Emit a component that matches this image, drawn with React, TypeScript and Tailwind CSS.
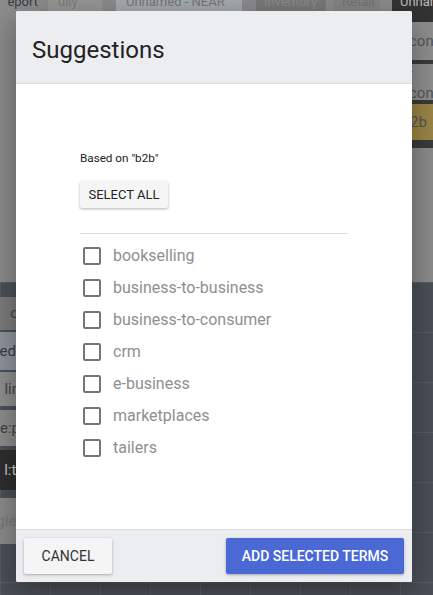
import React from 'react';

const terms = [
  'bookselling',
  'business-to-business',
  'business-to-consumer',
  'crm',
  'e-business',
  'marketplaces',
  'tailers',
];

function Backdrop() {
  return (
    <div className="flex h-full w-full flex-col">
      {/* top strip of tabs, dimmed */}
      <div className="flex h-[282px] flex-col bg-[#8a8a8a]">
        <div className="flex h-[22px] text-[13px] leading-none">
          <div className="flex w-[42px] items-start justify-end overflow-hidden bg-[#8c8c8c] pr-1 text-[#3c3c3c]">
            <span className="-mt-[5px]">eport</span>
          </div>
          <div className="ml-[6px] w-[54px] overflow-hidden bg-[#959595] pl-[10px] text-[#7a7a7a]">
            <span className="-mt-[5px] block">ully</span>
          </div>
          <div className="ml-[14px] w-[126px] overflow-hidden bg-[#a3a8ad] pl-[10px] text-[#727578]">
            <span className="-mt-[5px] block">Unnamed - NEAR</span>
          </div>
          <div className="ml-[14px] w-[70px] overflow-hidden bg-[#787878] pl-[8px] text-[#8a8a8a]">
            <span className="-mt-[5px] block">Inventory</span>
          </div>
          <div className="ml-[8px] w-[46px] overflow-hidden bg-[#848484] pl-[8px] text-[#727272]">
            <span className="-mt-[5px] block">Retail</span>
          </div>
          <div className="ml-[12px] flex-1 overflow-hidden bg-[#333333] pl-[8px] text-[#bdbdbd]">
            <span className="-mt-[5px] block">Unnamed</span>
          </div>
        </div>
        <div className="flex flex-1 justify-end">
          <div className="flex w-[24px] flex-col bg-[#3a3a3a] text-[15px] text-[#555]">
            <div className="flex h-[38px] items-center overflow-hidden bg-[#8d8d8d]">con</div>
            <div className="mt-[4px] flex h-[36px] items-center overflow-hidden bg-[#8d8d8d]">-con</div>
            <div className="mt-[4px] flex h-[36px] items-center overflow-hidden bg-[#9a8545] pl-[1px]">2b</div>
            <div className="mt-[8px] flex-1 bg-[#8a8a8a]" />
          </div>
        </div>
      </div>
      {/* lower grid area */}
      <div className="flex flex-1 bg-[#4a4f57] bg-[linear-gradient(to_right,rgba(255,255,255,0.07)_1px,transparent_1px),linear-gradient(to_bottom,rgba(255,255,255,0.07)_1px,transparent_1px)] bg-[size:50px_50px]">
        <div className="flex w-[20px] flex-col pt-[15px] text-[15px] text-[#444]">
          <div className="flex h-[33px] items-center justify-end overflow-hidden bg-[#7b7b7b] pr-[2px]">c</div>
          <div className="mt-[2px] flex h-[38px] items-center justify-end overflow-hidden bg-[#8c949c] text-[#3d3d3d]">edI</div>
          <div className="mt-[2px] flex h-[34px] items-center justify-end overflow-hidden bg-[#8e8e8e]">lin</div>
          <div className="mt-[4px] flex h-[36px] items-center justify-end overflow-hidden bg-[#8c8c8c]">le:p</div>
          <div className="mt-[4px] flex h-[40px] items-center justify-end overflow-hidden bg-[#2e2e2e] text-[#c8c8c8]">l:ti</div>
          <div className="mt-[8px] flex h-[46px] items-center justify-end overflow-hidden bg-[#8a8a8a] text-[#777]">glel</div>
        </div>
      </div>
    </div>
  );
}

function Checkbox() {
  return <span className="inline-block h-[18px] w-[18px] shrink-0 rounded-[2px] border-2 border-[#757575]" />;
}

export default function App() {
  return (
    <div className="relative h-[595px] w-[433px] overflow-hidden font-['Roboto',sans-serif]">
      <Backdrop />
      <div className="absolute left-[16px] top-[11px] flex h-[571px] w-[396px] flex-col overflow-hidden rounded-[2px] bg-white shadow-[0_10px_30px_rgba(0,0,0,0.35)]">
        <div className="flex h-[73px] items-center border-b border-[#dcdcdc] bg-[#ecedf1] px-[16px] pt-[6px]">
          <h2 className="text-[24px] font-normal text-[#222]">Suggestions</h2>
        </div>
        <div className="flex-1 px-[64px] pt-[67px]">
          <p className="text-[11.7px] leading-[14px] text-[#222]">Based on "b2b"</p>
          <button className="mt-[16px] h-[27px] w-[88px] rounded-[2px] bg-[#f5f5f5] text-[13px] text-[#222] shadow-[0_1px_3px_rgba(0,0,0,0.3)]">
            SELECT ALL
          </button>
          <div className="mt-[25px] h-px w-[268px] bg-[#dddddd]" />
          <ul className="mt-[6px] flex flex-col">
            {terms.map((term) => (
              <li key={term} className="flex h-[32px] items-center gap-[12px] pl-[3px]">
                <Checkbox />
                <span className="text-[16px] text-[#8f8f8f]">{term}</span>
              </li>
            ))}
          </ul>
        </div>
        <div className="flex h-[53px] items-center justify-between border-t border-[#dcdcdc] bg-[#ecedf1] px-[8px]">
          <button className="h-[36px] w-[88px] rounded-[2px] bg-[#f5f5f5] text-[14px] text-[#333] shadow-[0_1px_3px_rgba(0,0,0,0.3)]">
            CANCEL
          </button>
          <button className="h-[36px] w-[178px] rounded-[2px] bg-[#4a69d4] text-[14px] font-medium text-white shadow-[0_1px_3px_rgba(0,0,0,0.3)]">
            ADD SELECTED TERMS
          </button>
        </div>
      </div>
    </div>
  );
}
